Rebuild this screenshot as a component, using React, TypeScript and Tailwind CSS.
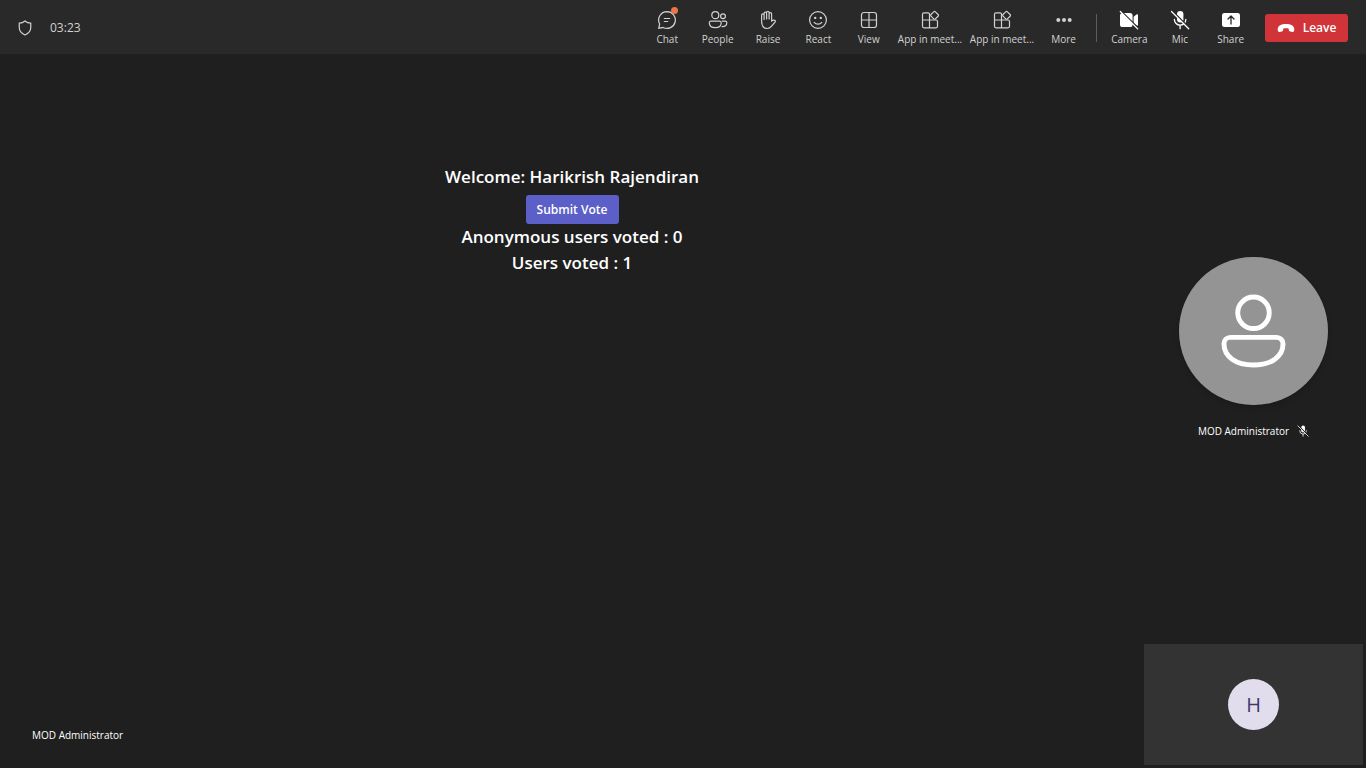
import type { ReactNode } from "react";

function Icon({ children, className = "h-5 w-5" }: { children: ReactNode; className?: string }) {
  return (
    <svg viewBox="0 0 20 20" className={className} fill="none" stroke="currentColor" strokeWidth="1.2" strokeLinecap="round" strokeLinejoin="round" aria-hidden="true">
      {children}
    </svg>
  );
}

const ShieldIcon = () => (
  <Icon className="h-4 w-4">
    <path strokeWidth="1.5" d="M10 1.2c2 1.7 4.4 2.6 7.2 2.8v5.2c0 4.5-2.4 7.6-7.2 9.6-4.8-2-7.2-5.1-7.2-9.6V4C5.600 3.800 8 2.900 10 1.200Z" />
  </Icon>
);

const ChatIcon = () => (
  <Icon>
    <path d="M10 1.600a8.400 8.400 0 1 1-3.900 15.850L1.700 18.400l.95-4.400A8.400 8.400 0 0 1 10 1.600Z" />
    <path d="M7.300 8.500h5.400M7.300 11.500h3.400" />
  </Icon>
);

const PeopleIcon = () => (
  <Icon>
    <circle cx="7.300" cy="5.200" r="3.500" />
    <circle cx="15" cy="6.200" r="2.400" />
    <path d="M2.800 11.200h8.900a1.500 1.500 0 0 1 1.500 1.500c0 3.200-2.300 5-5.950 5s-5.950-1.800-5.950-5a1.500 1.500 0 0 1 1.500-1.500Z" />
    <path d="M14.300 11.200h3a1.500 1.500 0 0 1 1.500 1.500c0 2.700-1.700 4.100-4.700 4" />
  </Icon>
);

const HandIcon = () => (
  <Icon>
    <path d="M3.600 11V5.200a1.250 1.250 0 0 1 2.500 0V9.500 3.300a1.250 1.250 0 0 1 2.500 0V9 2.500a1.250 1.250 0 0 1 2.500 0V9 3.800a1.250 1.250 0 0 1 2.500 0v7.400c.9-.9 2-1.200 3.200-.8.700.3.800 1 .4 1.500l-3.600 4.300c-1.300 1.600-2.500 2.300-4.400 2.300-3.800 0-5.600-2.700-5.600-7.500Z" />
  </Icon>
);

const SmileIcon = () => (
  <Icon>
    <circle cx="10" cy="10" r="8.400" />
    <path d="M6.200 12.400c1.900 2.400 5.700 2.400 7.600 0" />
    <circle cx="7.200" cy="7.900" r="1.200" fill="currentColor" stroke="none" />
    <circle cx="12.800" cy="7.900" r="1.200" fill="currentColor" stroke="none" />
  </Icon>
);

const GridIcon = () => (
  <Icon>
    <rect x="2.500" y="2.500" width="15" height="15" rx="2.500" />
    <path d="M10 2.500v15M2.500 10h15" />
  </Icon>
);

const AppsIcon = () => (
  <Icon>
    <path d="M9.500 10V4.300A1.500 1.500 0 0 0 8 2.800H4a1.500 1.500 0 0 0-1.500 1.500v12A1.500 1.500 0 0 0 4 17.800h12a1.500 1.500 0 0 0 1.500-1.500v-4.800A1.500 1.500 0 0 0 16 10H2.500M9.500 10v7.800" />
    <path d="M13.700 1.800a1.200 1.200 0 0 1 1.700 0l2.700 2.700a1.200 1.200 0 0 1 0 1.700l-2.700 2.700a1.200 1.200 0 0 1-1.700 0L11 6.200a1.200 1.200 0 0 1 0-1.700Z" />
  </Icon>
);

const MoreIcon = () => (
  <Icon>
    <g fill="currentColor" stroke="none">
      <circle cx="4.300" cy="10" r="2" />
      <circle cx="10" cy="10" r="2" />
      <circle cx="15.700" cy="10" r="2" />
    </g>
  </Icon>
);

const CameraOffIcon = () => (
  <Icon>
    <g fill="currentColor" stroke="none">
      <rect x="1" y="3" width="12.600" height="14" rx="2.600" />
      <path d="m14.600 6.800 3.200-2.500c.5-.4 1.200 0 1.200.6v10.200c0 .6-.7 1-1.200.6l-3.200-2.500Z" />
    </g>
    <path d="M2.500 1.500 20 19" stroke="#292929" strokeWidth="1.600" />
    <path d="M1.300 1.500 18.700 18.900" strokeWidth="1.300" />
  </Icon>
);

const MicOffIcon = ({ small = false }: { small?: boolean }) => (
  <Icon className={small ? "h-3 w-3" : "h-5 w-5"}>
    <rect x="7" y="1" width="6.400" height="11.500" rx="3.200" fill="currentColor" stroke="none" />
    <path d="M4.400 9.500a5.700 5.700 0 0 0 11.400 0M10.100 15.300v3.400" strokeWidth="1.300" />
    <path d="M2.800 1.600 20 18.800" stroke={small ? "#1f1f1f" : "#292929"} strokeWidth="1.800" />
    <path d="M1.500 1.500 18.700 18.700" strokeWidth="1.300" />
  </Icon>
);

const ShareIcon = () => (
  <Icon>
    <rect x="1" y="3" width="18" height="14" rx="2.300" fill="currentColor" stroke="none" />
    <path d="M10 14V6.200M7 9l3-3 3 3" stroke="#292929" strokeWidth="1.300" />
  </Icon>
);

const HangUpIcon = () => (
  <svg viewBox="0 0 18 10" className="h-[10px] w-[18px]" fill="currentColor" aria-hidden="true">
    <path d="M9 1c4.700 0 8.300 1.900 8.300 5.200 0 .9-.1 1.400-.4 2-.3.600-.8.800-1.500.7l-2.300-.4c-.7-.1-1.100-.5-1.200-1.200l-.3-1.700C10.300 5 7.700 5 6.400 5.600l-.3 1.700c-.1.700-.5 1.100-1.200 1.200l-2.300.4c-.7.100-1.200-.1-1.500-.7-.3-.6-.4-1.100-.4-2C.700 2.900 4.300 1 9 1Z" />
  </svg>
);

function ToolButton({ label, icon, bright = false, badge = false }: { label: string; icon: ReactNode; bright?: boolean; badge?: boolean }) {
  return (
    <button type="button" className="flex w-full flex-col items-center gap-[3px] text-[#d1d1d1]">
      <span className={bright ? "relative text-white" : "relative"}>
        {icon}
        {badge && <span className="absolute -top-[3px] -right-px h-[7px] w-[7px] rounded-full bg-[#e97548]" />}
      </span>
      <span className="text-[10px] leading-3 whitespace-nowrap">{label}</span>
    </button>
  );
}

export default function App() {
  return (
    <div className="flex min-h-screen flex-col bg-[#1f1f1f] font-['Open_Sans','Noto_Sans',sans-serif] text-white">
      <header className="flex h-[54px] items-center justify-between bg-[#292929] pt-px pr-[18px] pl-[17px]">
        <div className="flex items-center gap-[17px] text-[#d1d1d1]">
          <ShieldIcon />
          <time className="text-xs">03:23</time>
        </div>
        <div className="flex items-center">
          <nav aria-label="Meeting controls" className="flex items-center">
            <div className="grid w-[252px] grid-cols-5">
              <ToolButton label="Chat" icon={<ChatIcon />} badge />
              <ToolButton label="People" icon={<PeopleIcon />} />
              <ToolButton label="Raise" icon={<HandIcon />} />
              <ToolButton label="React" icon={<SmileIcon />} />
              <ToolButton label="View" icon={<GridIcon />} />
            </div>
            <div className="grid w-36 grid-cols-2">
              <ToolButton label="App in meet..." icon={<AppsIcon />} />
              <ToolButton label="App in meet..." icon={<AppsIcon />} />
            </div>
            <div className="w-[51px]">
              <ToolButton label="More" icon={<MoreIcon />} />
            </div>
          </nav>
          <div className="mx-[7px] h-7 w-px bg-[#5c5c5c]" />
          <div className="grid w-[152px] grid-cols-3">
            <ToolButton label="Camera" icon={<CameraOffIcon />} bright />
            <ToolButton label="Mic" icon={<MicOffIcon />} bright />
            <ToolButton label="Share" icon={<ShareIcon />} bright />
          </div>
          <button type="button" className="ml-[9px] flex h-7 w-[83px] items-center justify-center gap-2 rounded-[3px] bg-[#d13438] text-xs font-semibold">
            <HangUpIcon />
            Leave
          </button>
        </div>
      </header>

      <div className="flex flex-1">
        <main className="flex flex-1 flex-col justify-between pt-[110px] pb-6">
          <section className="flex flex-col items-center text-[17px] leading-[26px] font-semibold">
            <h1>Welcome: Harikrish Rajendiran</h1>
            <button type="button" className="mt-[5px] h-[29px] w-[93px] rounded-[3px] bg-[#5b5fc7] text-xs font-semibold">
              Submit Vote
            </button>
            <p>Anonymous users voted : 0</p>
            <p>Users voted : 1</p>
          </section>
          <p className="pl-8 text-[10px] leading-[18px]">MOD Administrator</p>
        </main>

        <aside className="mr-[3px] flex w-[219px] flex-col items-center justify-between pt-[203px] pb-[3px]">
          <div className="flex flex-col items-center gap-[17px]">
            <div className="flex h-[148px] w-[149px] items-center justify-center rounded-full bg-[#949494] shadow-md">
              <svg viewBox="0 0 66 74" className="h-[74px] w-[65px]" fill="none" stroke="currentColor" strokeWidth="5" aria-hidden="true">
                <circle cx="33" cy="18.500" r="16" />
                <path d="M9.500 43.500h47a6.500 6.500 0 0 1 6.500 6.500c0 13-12 21.500-30 21.500S3 63 3 50a6.500 6.500 0 0 1 6.500-6.500Z" />
              </svg>
            </div>
            <div className="flex items-center gap-2 text-[10px] leading-[18px]">
              MOD Administrator
              <MicOffIcon small />
            </div>
          </div>
          <div className="flex h-[121px] w-full items-center justify-center bg-[#333333]">
            <div className="flex h-[51px] w-[51px] items-center justify-center rounded-full bg-[#e2ddec] text-xl font-medium text-[#3d3966]">H</div>
          </div>
        </aside>
      </div>
    </div>
  );
}
